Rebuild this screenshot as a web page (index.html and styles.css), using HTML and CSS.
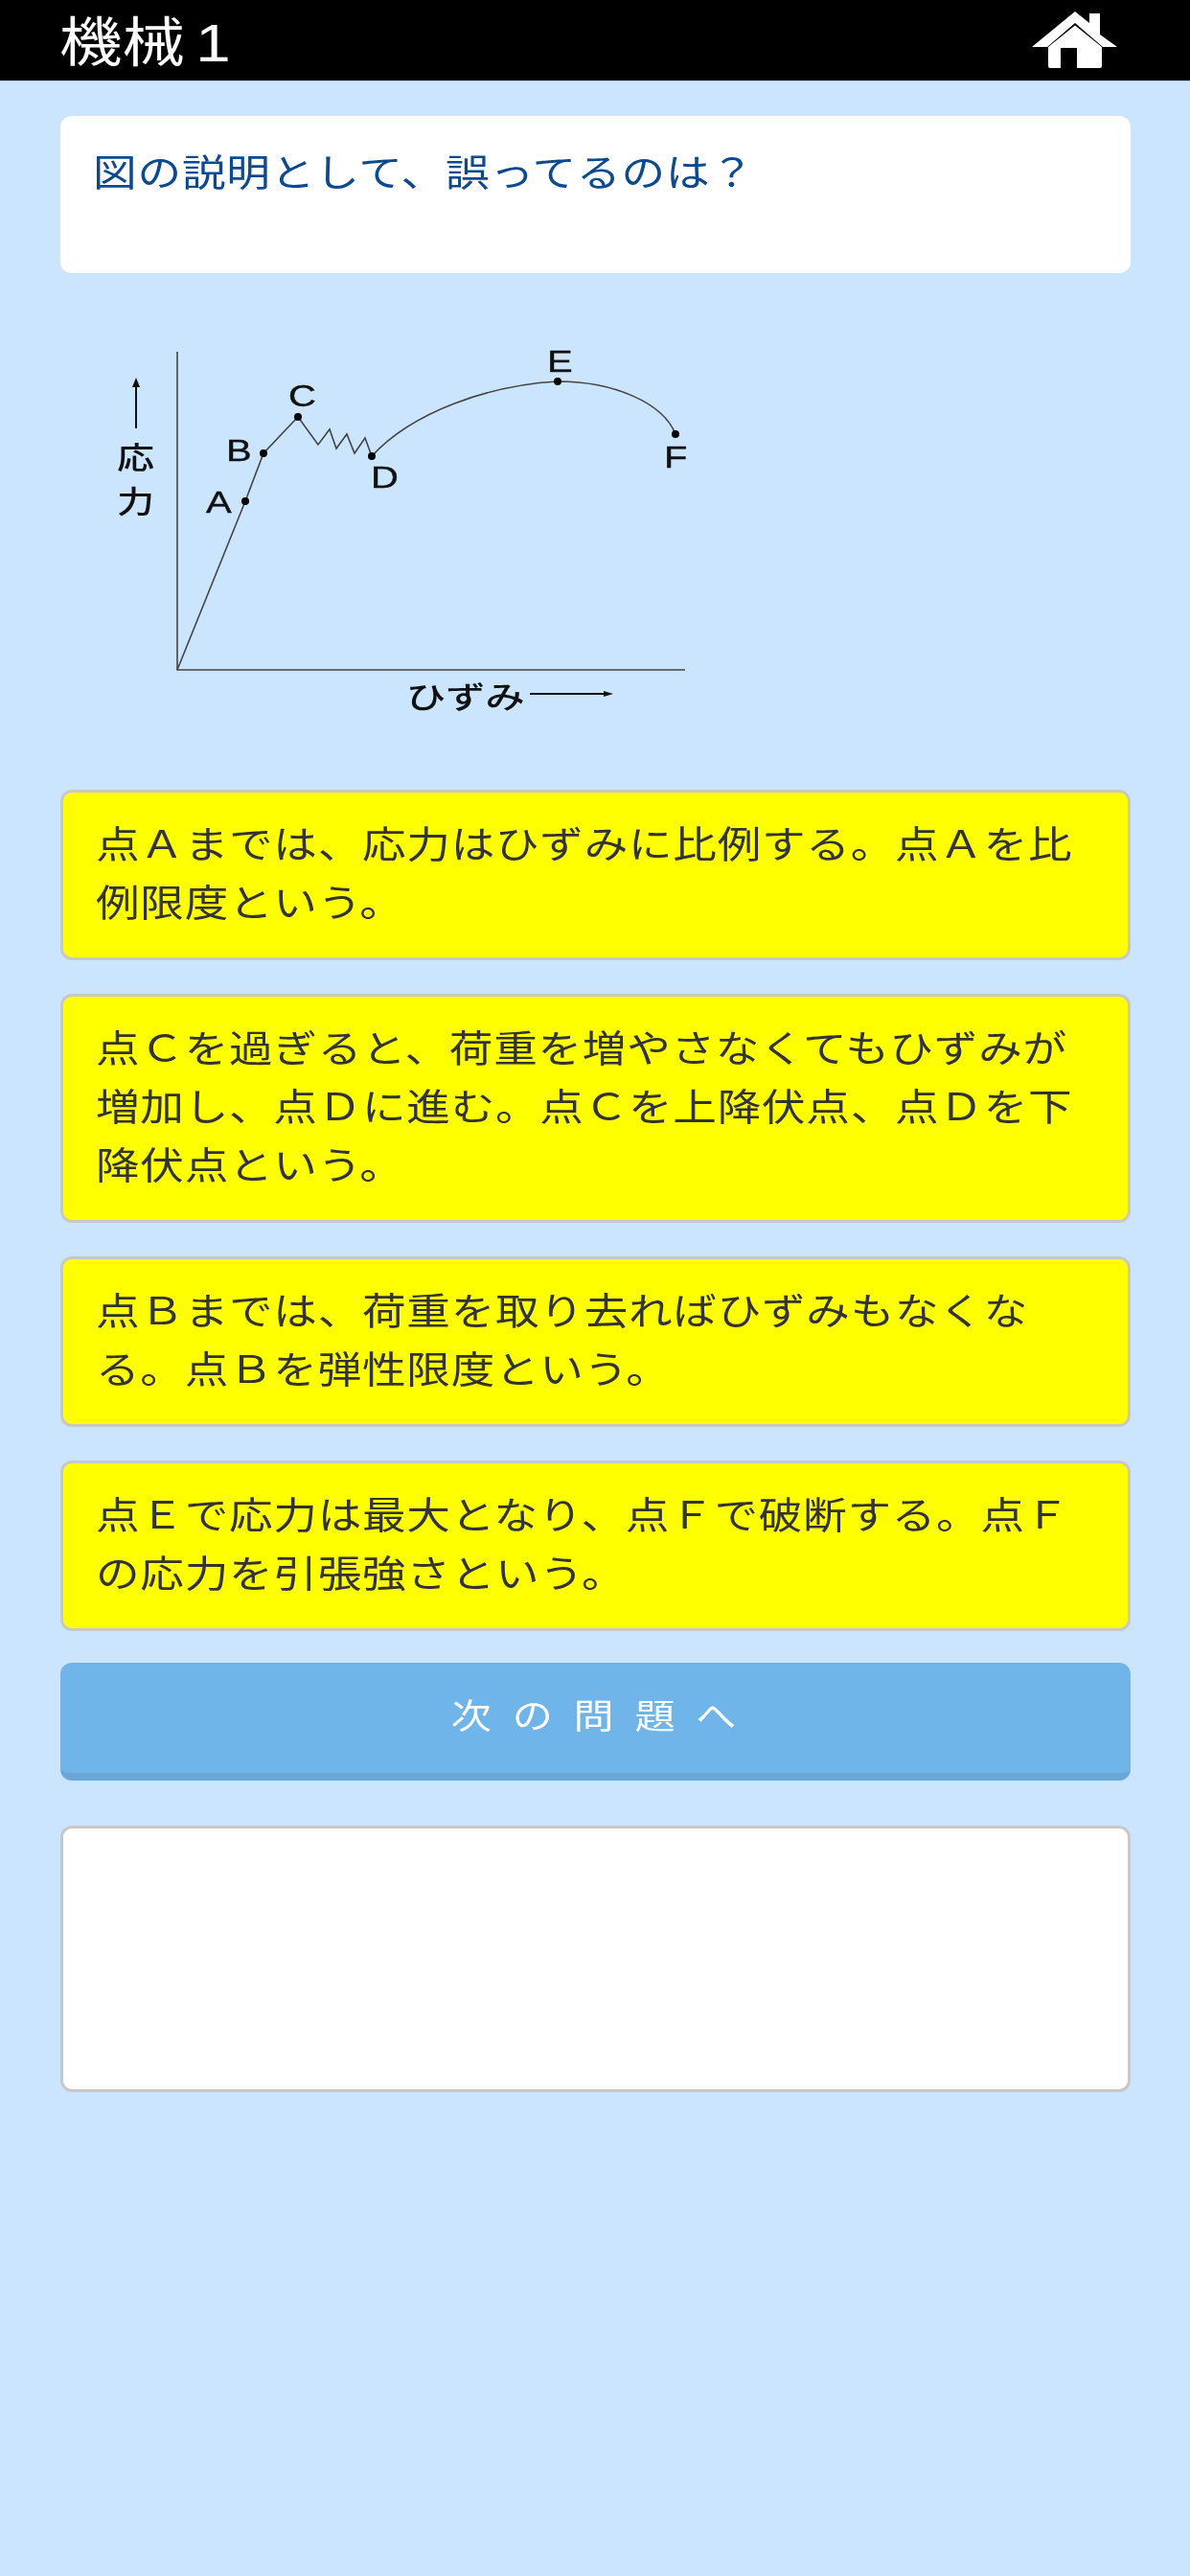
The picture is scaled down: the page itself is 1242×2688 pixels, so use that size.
FILE: index.html
```html
<!DOCTYPE html>
<html lang="ja">
<head>
<meta charset="utf-8">
<title>機械 1</title>
<link rel="stylesheet" href="styles.css">
</head>
<body>
<header class="topbar">
  <h1 class="title"><span class="wide">機械 1</span></h1>
  <svg class="home" viewBox="0 0 90 60" aria-label="ホーム">
    <path class="home-fill" d="M0 37 L45 0 L60 12 L60 2 L71 2 L71 24 L89 37 L74 37 L45 12 L16 37 Z"/>
    <path class="home-fill" d="M45 14.5 L73 37 L73 57 Q73 59 71 59 L47 59 L47 38 L30 38 L30 59 L19 59 Q17 59 17 57 L17 37 Z"/>
  </svg>
</header>
<main class="content">
  <section class="question"><p class="wide q-text">図の説明として、誤ってるのは？</p></section>
  <svg class="figure" viewBox="0 0 660 430">
    <g class="lines">
      <path d="M105 37 V369 H635"/>
      <path d="M105 369 L176 193 L195 143 L231 105 L252 134 L264 118 L271 138 L282 123 L290 143 L301 127 L308 146"/>
      <path d="M308 146 C350 100 430 72 502 68 C560 68 612 90 625 123"/>
      <path class="thick" d="M62 70 V117"/>
      <path class="thick" d="M473 394 H552"/>
    </g>
    <path class="tip" d="M62 64 L58 74 H66 Z"/>
    <path class="tip" d="M560 394 L550 391 V397 Z"/>
    <g class="dots">
      <circle cx="176" cy="193" r="4"/>
      <circle cx="195" cy="143" r="4"/>
      <circle cx="231" cy="105" r="4"/>
      <circle cx="308" cy="146" r="4"/>
      <circle cx="502" cy="68" r="4"/>
      <circle cx="625" cy="123" r="4"/>
    </g>
    <g class="labels">
      <text transform="translate(135 205) scale(1.25 1)">A</text>
      <text transform="translate(156 151) scale(1.25 1)">B</text>
      <text transform="translate(221 94) scale(1.25 1)">C</text>
      <text transform="translate(307 179) scale(1.25 1)">D</text>
      <text transform="translate(491 58) scale(1.25 1)">E</text>
      <text transform="translate(613 158) scale(1.25 1)">F</text>
    </g>
    <g class="jp-labels">
      <text transform="translate(42 159) scale(1.22 1)">応</text>
      <text transform="translate(42 205) scale(1.22 1)">力</text>
      <text transform="translate(344 409) scale(1.29 1)">ひずみ</text>
    </g>
  </svg>
  <section class="options">
    <div class="option"><p class="wide">点Ａまでは、応力はひずみに比例する。点Ａを比例限度という。</p></div>
    <div class="option"><p class="wide">点Ｃを過ぎると、荷重を増やさなくてもひずみが増加し、点Ｄに進む。点Ｃを上降伏点、点Ｄを下降伏点という。</p></div>
    <div class="option"><p class="wide">点Ｂまでは、荷重を取り去ればひずみもなくなる。点Ｂを弾性限度という。</p></div>
    <div class="option"><p class="wide">点Ｅで応力は最大となり、点Ｆで破断する。点Ｆの応力を引張強さという。</p></div>
  </section>
  <button class="next" type="button"><span class="wide next-label">次の問題へ</span></button>
  <section class="adbox"></section>
</main>
</body>
</html>
```
FILE: styles.css
```css
* { box-sizing: border-box; }
html, body { margin: 0; padding: 0; }
body {
  width: 1242px;
  min-height: 2688px;
  background: #cce5ff;
  font-family: "Liberation Sans", "Noto Sans CJK JP", sans-serif;
  font-weight: 400;
}
.wide {
  display: block;
  width: 85.47%;
  margin: 0;
  transform: scaleX(1.17);
  transform-origin: 0 0;
}
.topbar {
  height: 85px;
  background: #000;
  border-bottom: 1px solid #b8c8d8;
  display: flex;
  align-items: center;
  justify-content: space-between;
  padding: 0 75px 0 62px;
}
.title {
  margin: 0;
  padding-top: 6px;
  flex: 1;
  color: #fff;
  font-size: 56px;
  font-weight: 400;
  line-height: 78px;
  word-spacing: -6px;
}
.home { width: 90px; height: 60px; flex: none; }
.home-fill { fill: #fff; }
.content {
  display: flex;
  flex-direction: column;
  padding: 36px 62px 0 63px;
}
.question {
  height: 164px;
  background: #fff;
  border-radius: 12px;
  padding: 32px 34px 0;
}
.q-text {
  color: #0b4a90;
  font-size: 39px;
  line-height: 56px;
  letter-spacing: 0.7px;
}
.figure {
  display: block;
  width: 660px;
  height: 430px;
  margin: 45px 0 0 17px;
  filter: blur(0.6px);
}
.lines path { fill: none; stroke: #444; stroke-width: 1.6; }
.lines .thick { stroke: #111; stroke-width: 2; }
.tip { fill: #111; }
.dots circle { fill: #000; }
.labels text {
  font-family: "Liberation Sans", sans-serif;
  font-size: 32px;
  fill: #111;
  stroke: #111;
  stroke-width: 0.4;
}
.jp-labels text {
  font-family: "Noto Sans CJK JP", sans-serif;
  font-size: 32px;
  font-weight: 500;
  fill: #111;
}
.options {
  display: flex;
  flex-direction: column;
  gap: 35px;
  margin-top: 64px;
}
.option {
  background: #ff0;
  border: 3px solid #c8c8c8;
  border-radius: 12px;
  padding: 24px 34px 26px;
  color: #333;
  font-size: 39px;
  line-height: 61px;
  letter-spacing: 0.6px;
}
.next {
  display: block;
  width: 100%;
  height: 123px;
  margin-top: 33px;
  padding: 0 0 10px 18px;
  border: 0;
  border-bottom: 8px solid #68a7d6;
  border-radius: 12px;
  background: #70b5ea;
  color: #fff;
  font-family: inherit;
  font-weight: 400;
  font-size: 36px;
  letter-spacing: 18.6px;
}
.next-label { width: 100%; transform-origin: 50% 0; }
.adbox {
  height: 278px;
  margin-top: 47px;
  background: #fff;
  border: 3px solid #c8c8c8;
  border-radius: 12px;
}
```
